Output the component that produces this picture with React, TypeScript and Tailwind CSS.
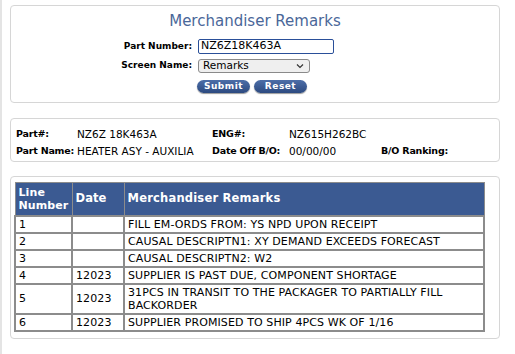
const rows = [
  { line: "1", date: "", remark: "FILL EM-ORDS FROM: YS NPD UPON RECEIPT" },
  { line: "2", date: "", remark: "CAUSAL DESCRIPTN1: XY DEMAND EXCEEDS FORECAST" },
  { line: "3", date: "", remark: "CAUSAL DESCRIPTN2: W2" },
  { line: "4", date: "12023", remark: "SUPPLIER IS PAST DUE, COMPONENT SHORTAGE" },
  { line: "5", date: "12023", remark: "31PCS IN TRANSIT TO THE PACKAGER TO PARTIALLY FILL BACKORDER" },
  { line: "6", date: "12023", remark: "SUPPLIER PROMISED TO SHIP 4PCS WK OF 1/16" },
];

function PillButton({ label }: { label: string }) {
  return (
    <button className="h-[13px] w-[53px] rounded-full bg-gradient-to-b from-[#4d6ea8] to-[#2c4a80] text-[9px] font-bold leading-[13px] tracking-[0.5px] text-white shadow-[0_1px_1px_rgba(0,0,0,0.4)]">
      {label}
    </button>
  );
}

export default function App() {
  return (
    <div
      className="min-h-[354px] w-[515px] border-l-2 border-[#e4e4e4] bg-white pt-[5px] text-[10px] text-black"
      style={{ fontFamily: '"DejaVu Sans", Verdana, sans-serif' }}
    >
      {/* search panel */}
      <div className="ml-[8px] h-[98px] w-[490px] rounded-[4px] border border-[#d6d6d6] pt-[6px]">
        <h1 className="text-center text-[15px] leading-[18px] text-[#4a6799]">Merchandiser Remarks</h1>
        <div className="mt-[9px] flex items-center">
          <span className="w-[181px] whitespace-nowrap text-right text-[9px] font-bold">Part Number:</span>
          <input
            defaultValue="NZ6Z18K463A"
            className="ml-[6px] h-[15px] w-[136px] rounded-[2px] border border-[#2a4f99] px-[2px] text-[11px] outline-none"
          />
        </div>
        <div className="mt-[5px] flex items-center">
          <span className="w-[181px] whitespace-nowrap text-right text-[9px] font-bold">Screen Name:</span>
          <div className="ml-[6px] flex h-[14px] w-[112px] items-center justify-between rounded-[3px] border border-[#8a8a8a] bg-[#efefef] pl-[4px] pr-[5px] text-[10.5px]">
            <span>Remarks</span>
            <svg width="8" height="6" viewBox="0 0 8 6" fill="none" stroke="#333" strokeWidth="1.2">
              <path d="M1 1.5l3 3 3-3" />
            </svg>
          </div>
        </div>
        <div className="ml-[186px] mt-[7px] flex gap-[4px]">
          <PillButton label="Submit" />
          <PillButton label="Reset" />
        </div>
      </div>

      {/* part info panel */}
      <div className="ml-[8px] mt-[15px] h-[44px] w-[490px] whitespace-nowrap rounded-[4px] border border-[#d6d6d6] px-[5px] pt-[7px] text-[10.5px]">
        <div className="flex h-[17px] items-center">
          <span className="w-[61px] shrink-0 text-[9.5px] font-bold tracking-[-0.2px]">Part#:</span>
          <span className="w-[135px] shrink-0">NZ6Z 18K463A</span>
          <span className="w-[77px] shrink-0 text-[9.5px] font-bold tracking-[-0.2px]">ENG#:</span>
          <span>NZ615H262BC</span>
        </div>
        <div className="flex h-[17px] items-center">
          <span className="w-[61px] shrink-0 text-[9.5px] font-bold tracking-[-0.2px]">Part Name:</span>
          <span className="w-[135px] shrink-0">HEATER ASY - AUXILIA</span>
          <span className="w-[77px] shrink-0 text-[9.5px] font-bold tracking-[-0.2px]">Date Off B/O:</span>
          <span className="w-[92px] shrink-0">00/00/00</span>
          <span className="text-[9.5px] font-bold tracking-[-0.2px]">B/O Ranking:</span>
        </div>
      </div>

      {/* remarks table panel */}
      <div className="ml-[8px] mt-[14px] w-[490px] rounded-[4px] border border-[#d6d6d6] px-[3px] pb-[6px] pt-[5px]">
        <table className="w-[471px] border-collapse border border-[#8c8c8c] text-[11px] tracking-[0.1px]">
          <thead>
            <tr className="bg-[#3b5a92] text-left font-bold leading-[13px] text-white">
              <th className="h-[33px] w-[57px] border border-[#8c8c8c] px-[3px] text-[11px]">Line Number</th>
              <th className="w-[52px] border border-[#8c8c8c] px-[3px] text-[11.5px]">Date</th>
              <th className="border border-[#8c8c8c] px-[3px] text-[11.5px] tracking-[0.2px]">Merchandiser Remarks</th>
            </tr>
          </thead>
          <tbody>
            {rows.map((r) => (
              <tr key={r.line}>
                <td className="border-2 border-[#8c8c8c] px-[3px] py-[1px] leading-[13px]">{r.line}</td>
                <td className="border-2 border-[#8c8c8c] px-[3px] py-[1px] leading-[13px]">{r.date}</td>
                <td className="border-2 border-[#8c8c8c] px-[3px] py-[1px] leading-[13px]">{r.remark}</td>
              </tr>
            ))}
          </tbody>
        </table>
      </div>
    </div>
  );
}
